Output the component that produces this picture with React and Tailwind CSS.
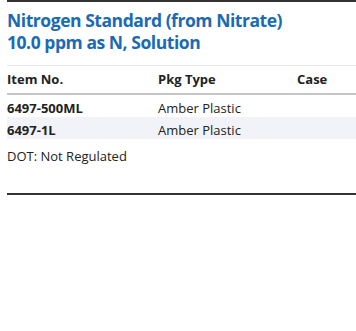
import React from 'react';

const ROWS = [
  { item: '6497-500ML', pkg: 'Amber Plastic', case: '' },
  { item: '6497-1L', pkg: 'Amber Plastic', case: '' },
];

const App = () => {
  return (
    <div className="w-[356px] h-[331px] bg-white pl-[7px] font-['Open_Sans',sans-serif] text-[#222]">
      {/* Top rule + title */}
      <div className="border-t-2 border-[#333] pt-[7px]">
        <h1 className="text-[17.5px] font-bold leading-[22px] tracking-[-0.45px] text-[#1b6ab4]">
          Nitrogen Standard (from Nitrate)
          <br />
          10.0 ppm as N, Solution
        </h1>
      </div>

      {/* Table */}
      <div className="mt-[12px] border-t border-[#e6e6e6]">
        <div className="grid grid-cols-[151px_139px_1fr] pt-[4px] pb-[5px] border-b-2 border-[#c4c4c4] text-[13px] font-bold leading-[18px]">
          <span>Item No.</span>
          <span>Pkg Type</span>
          <span>Case</span>
        </div>
        {ROWS.map((r, i) => (
          <div
            key={r.item}
            className={`grid grid-cols-[151px_139px_1fr] pt-[4px] text-[13px] leading-[18px] ${
              i % 2 === 1 ? 'bg-[#f1f3f8]' : 'bg-white'
            }`}
          >
            <span className="font-bold">{r.item}</span>
            <span>{r.pkg}</span>
            <span>{r.case}</span>
          </div>
        ))}
      </div>

      <p className="mt-[8px] text-[13px] leading-[18px]">DOT: Not Regulated</p>

      <div className="mt-[28px] border-t-2 border-[#333]" />
    </div>
  );
};

export default App;
